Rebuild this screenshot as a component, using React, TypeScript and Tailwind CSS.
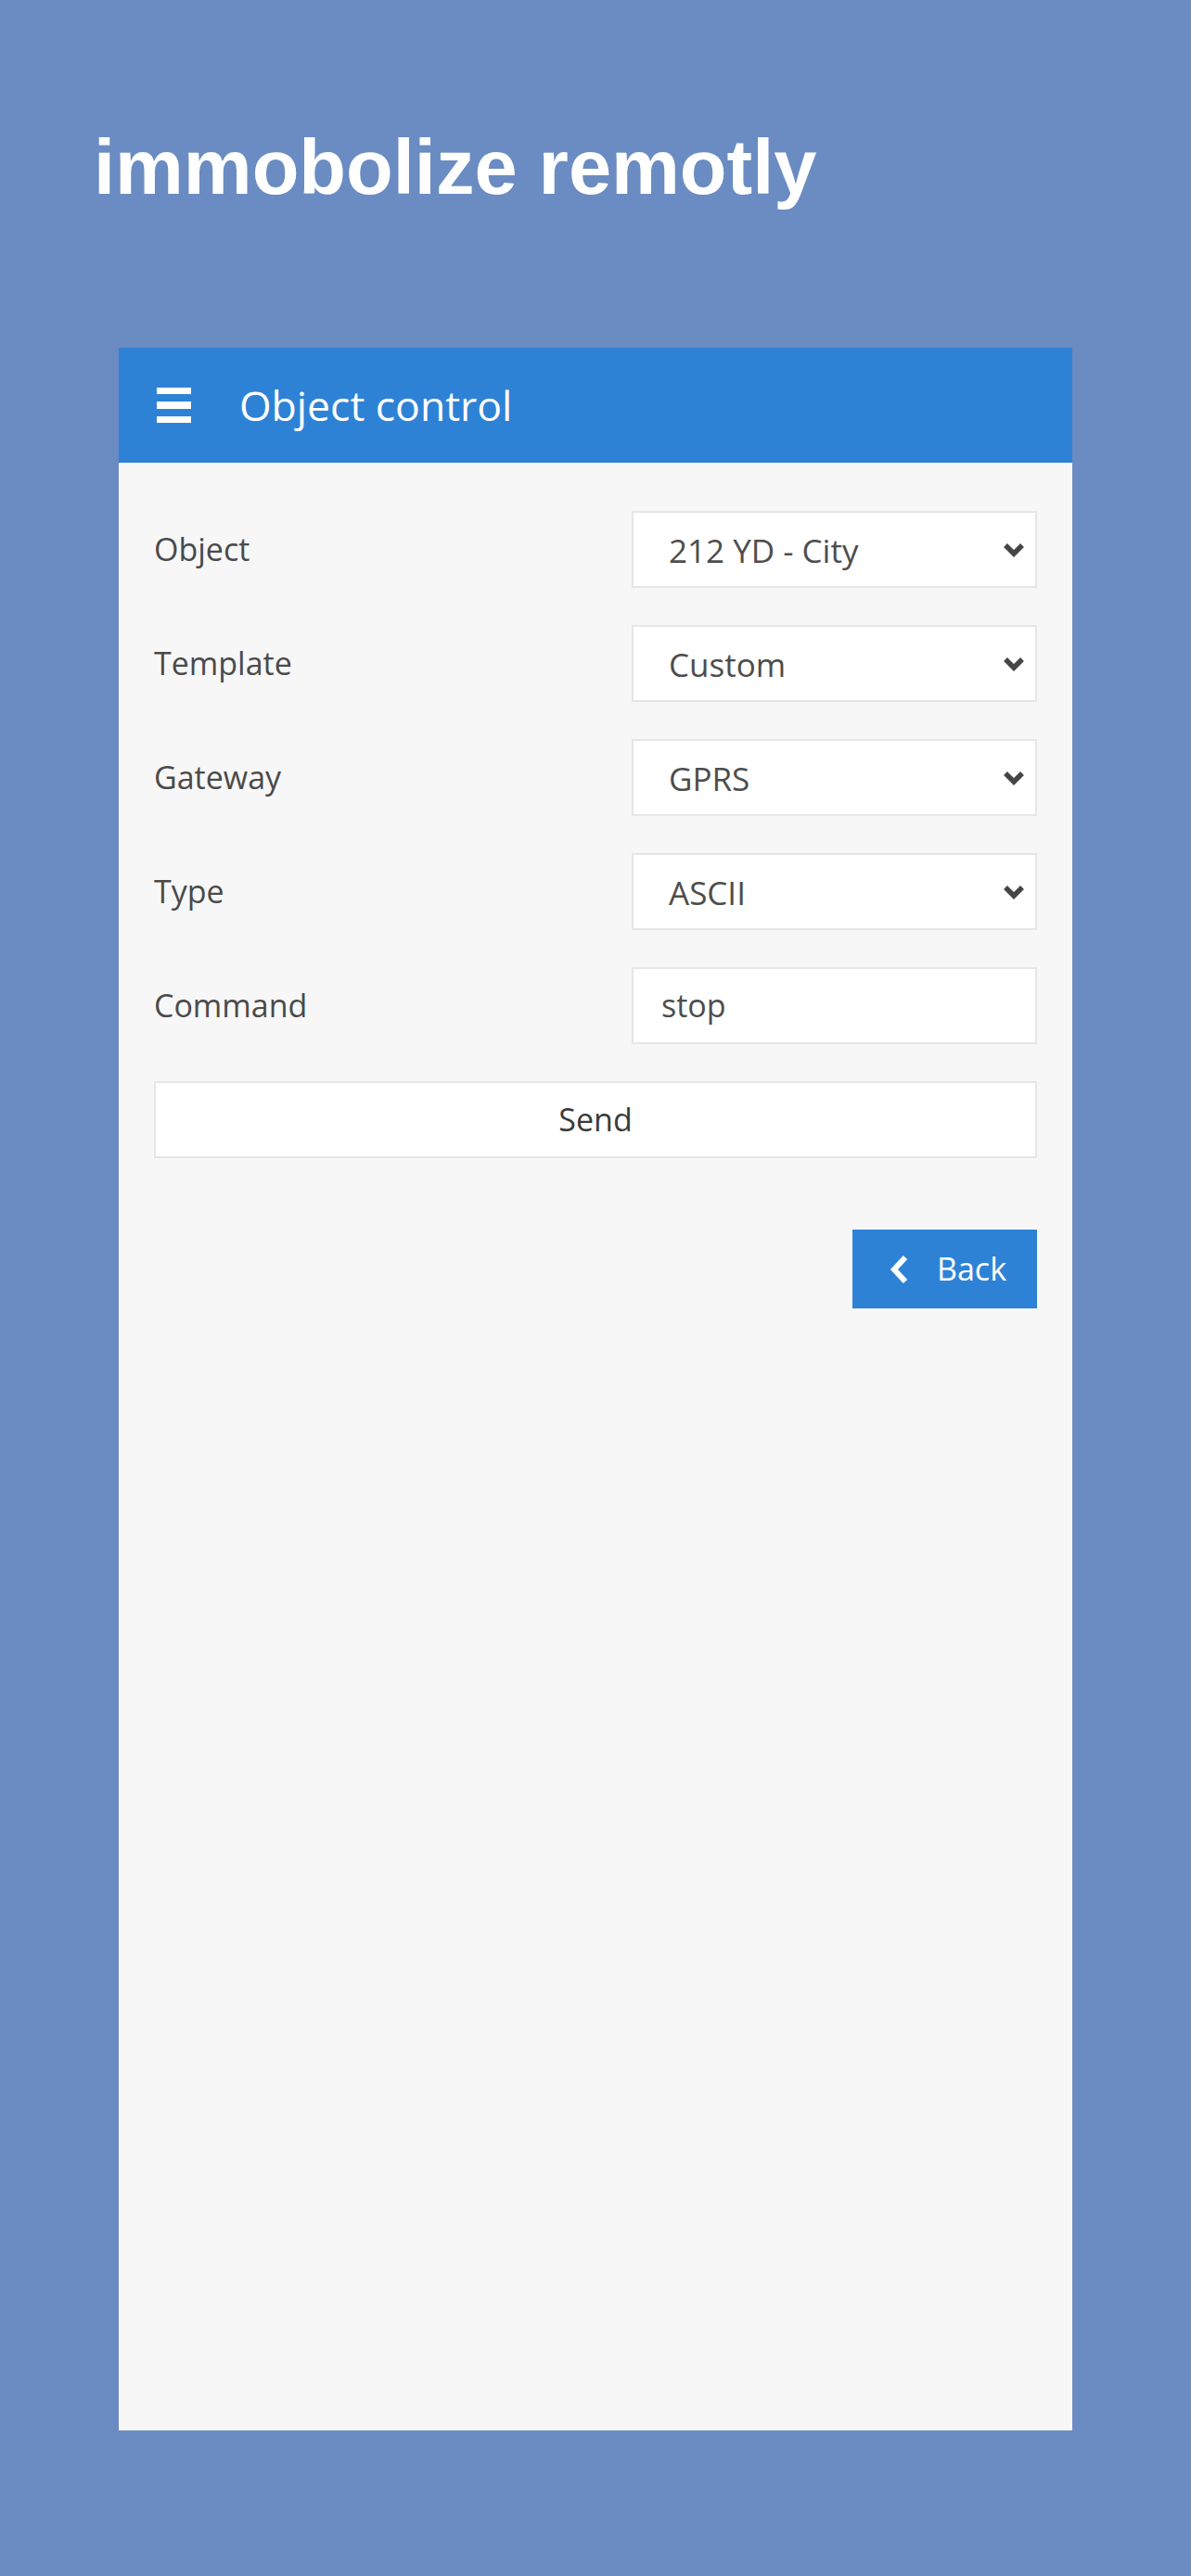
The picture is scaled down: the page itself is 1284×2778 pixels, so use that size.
import React from "react";

const Chevron = () => (
  <svg width="24" height="16" viewBox="0 0 24 16" className="shrink-0">
    <polyline points="3,3 12,12 21,3" fill="none" stroke="#454545" strokeWidth="5.5" strokeLinecap="butt" strokeLinejoin="miter" />
  </svg>
);

const SelectBox = ({ value }: { value: string }) => (
  <div className="w-[437px] h-[83px] bg-white border-2 border-[#e6e6e6] flex items-center justify-between pl-[38px] pr-[11px]">
    <span className="text-[35px] text-[#4d4d4d] pt-[3px]">{value}</span>
    <Chevron />
  </div>
);

const Row = ({ label, children }: { label: string; children: React.ReactNode }) => (
  <div className="flex items-center justify-between h-[83px]">
    <span className="text-[34px] text-[#4a4a4a]">{label}</span>
    {children}
  </div>
);

export default function App() {
  return (
    <div
      className="min-h-[2778px] w-full bg-[#6a8cc2]"
      style={{ fontFamily: '"Open Sans", "Liberation Sans", sans-serif' }}
    >
      <h1
        className="pt-[139px] pl-[101px] text-[83px] leading-none font-bold text-white"
        style={{ fontFamily: '"Liberation Sans", Arial, sans-serif' }}
      >
        immobolize remotly
      </h1>
      <div className="mt-[153px] ml-[128px] w-[1028px] h-[2246px] bg-[#f7f7f7] flex flex-col">
        <div className="h-[124px] bg-[#2e82d6] flex items-center pl-[41px]">
          <div className="flex flex-col gap-[8px]">
            <div className="w-[37px] h-[7px] bg-white" />
            <div className="w-[37px] h-[8px] bg-white" />
            <div className="w-[37px] h-[7px] bg-white" />
          </div>
          <span className="ml-[52px] text-[44.5px] text-white">Object control</span>
        </div>
        <div className="px-[38px] pt-[52px] flex flex-col gap-[40px]">
          <Row label="Object">
            <SelectBox value="212 YD - City" />
          </Row>
          <Row label="Template">
            <SelectBox value="Custom" />
          </Row>
          <Row label="Gateway">
            <SelectBox value="GPRS" />
          </Row>
          <Row label="Type">
            <SelectBox value="ASCII" />
          </Row>
          <Row label="Command">
            <div className="w-[437px] h-[83px] bg-white border-2 border-[#e6e6e6] flex items-center pl-[30px]">
              <span className="text-[34px] text-[#4d4d4d]">stop</span>
            </div>
          </Row>
          <div className="h-[83px] bg-white border-2 border-[#e6e6e6] flex items-center justify-center">
            <span className="text-[34px] text-[#3a3a3a]">Send</span>
          </div>
        </div>
        <div className="px-[38px] pt-[77px] flex justify-end">
          <div className="w-[199px] h-[85px] bg-[#2e82d6] flex items-center pl-[40px]">
            <svg width="22" height="32" viewBox="0 0 22 32" className="shrink-0">
              <polyline points="17,3 5,16 17,29" fill="none" stroke="white" strokeWidth="6" strokeLinejoin="miter" />
            </svg>
            <span className="ml-[29px] text-[34px] text-white">Back</span>
          </div>
        </div>
      </div>
    </div>
  );
}
